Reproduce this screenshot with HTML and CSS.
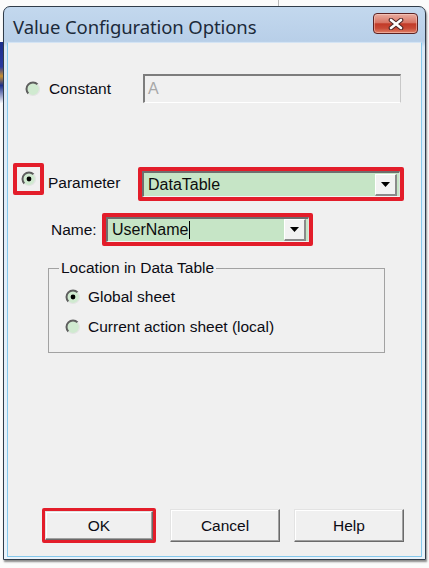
FILE: index.html
```html
<!DOCTYPE html>
<html>
<head>
<meta charset="utf-8">
<title>Value Configuration Options</title>
<link rel="stylesheet" href="styles.css">
</head>
<body>
<div class="screen">
  <span class="bg-strip"></span>
  <span class="bg-line"></span>
  <div class="window">
    <div class="titlebar">
      <span class="title">Value Configuration Options</span>
      <span class="close">
        <svg width="16" height="12" viewBox="0 0 16 12"><path d="M3 2L13 10M13 2L3 10" stroke="#4a2424" stroke-width="4.6" stroke-linecap="round"/><path d="M3 2L13 10M13 2L3 10" stroke="#ffffff" stroke-width="2.6" stroke-linecap="round"/></svg>
      </span>
    </div>
    <div class="client">
      <div class="row row-constant">
        <svg class="radio" width="16" height="16" viewBox="0 0 16 16"><circle cx="8" cy="8" r="6.5" fill="#d0ead0"/><path d="M12.6 3.4A6.5 6.5 0 0 0 3.4 12.6" fill="none" stroke="#5e5e5e" stroke-width="2"/><path d="M3.4 12.6A6.5 6.5 0 0 0 12.6 3.4" fill="none" stroke="#e4e4e4" stroke-width="1.2"/></svg>
        <span class="label label-constant">Constant</span>
        <div class="textfield">A</div>
      </div>
      <div class="row row-param">
        <span class="hl hl-radio">
          <svg class="radio" width="16" height="16" viewBox="0 0 16 16"><circle cx="8" cy="8" r="6.5" fill="#d0ead0"/><path d="M12.6 3.4A6.5 6.5 0 0 0 3.4 12.6" fill="none" stroke="#5e5e5e" stroke-width="2"/><path d="M3.4 12.6A6.5 6.5 0 0 0 12.6 3.4" fill="none" stroke="#e4e4e4" stroke-width="1.2"/><circle cx="8" cy="8" r="2.4" fill="#000"/></svg>
        </span>
        <span class="label label-param">Parameter</span>
        <div class="hl hl-combo">
          <div class="combo combo-wide">
            <span class="combo-text">DataTable</span>
            <span class="drop"><svg width="9" height="5" viewBox="0 0 9 5"><path d="M0 0H9L4.5 5Z" fill="#000"/></svg></span>
          </div>
        </div>
      </div>
      <div class="row row-name">
        <span class="label label-name">Name:</span>
        <div class="hl hl-name">
          <div class="combo combo-name">
            <span class="combo-text">UserName<span class="caret"></span></span>
            <span class="drop"><svg width="9" height="5" viewBox="0 0 9 5"><path d="M0 0H9L4.5 5Z" fill="#000"/></svg></span>
          </div>
        </div>
      </div>
      <fieldset class="group">
        <legend>Location in Data Table</legend>
        <div class="option">
          <svg class="radio" width="16" height="16" viewBox="0 0 16 16"><circle cx="8" cy="8" r="6.5" fill="#d0ead0"/><path d="M12.6 3.4A6.5 6.5 0 0 0 3.4 12.6" fill="none" stroke="#5e5e5e" stroke-width="2"/><path d="M3.4 12.6A6.5 6.5 0 0 0 12.6 3.4" fill="none" stroke="#e4e4e4" stroke-width="1.2"/><circle cx="8" cy="8" r="2.4" fill="#000"/></svg>
          <span class="label">Global sheet</span>
        </div>
        <div class="option">
          <svg class="radio" width="16" height="16" viewBox="0 0 16 16"><circle cx="8" cy="8" r="6.5" fill="#d0ead0"/><path d="M12.6 3.4A6.5 6.5 0 0 0 3.4 12.6" fill="none" stroke="#5e5e5e" stroke-width="2"/><path d="M3.4 12.6A6.5 6.5 0 0 0 12.6 3.4" fill="none" stroke="#e4e4e4" stroke-width="1.2"/></svg>
          <span class="label">Current action sheet (local)</span>
        </div>
      </fieldset>
      <div class="buttons">
        <div class="hl hl-ok"><button class="btn btn-ok">OK</button></div>
        <button class="btn">Cancel</button>
        <button class="btn">Help</button>
      </div>
    </div>
  </div>
</div>
</body>
</html>
```
FILE: styles.css
```css
html, body {
  margin: 0;
  padding: 0;
  background: #ffffff;
}
.screen {
  position: relative;
  width: 429px;
  height: 568px;
  overflow: hidden;
  background: #fbfbfb;
  padding: 6px 0 0 3px;
  box-sizing: border-box;
  font-family: "Liberation Sans", Arial, sans-serif;
  font-size: 15.5px;
  color: #0c0c14;
}
.bg-strip {
  position: absolute;
  left: 0;
  top: 42px;
  width: 3px;
  height: 62px;
  background: linear-gradient(#1c2f8c, #2a3aa0 40%, #c89030 55%, #1c2f8c 70%, #ffffff 100%);
}
.bg-line {
  position: absolute;
  left: 278px;
  top: 0;
  width: 1px;
  height: 6px;
  background: #b8b8b8;
}
.window {
  width: 423px;
  height: 554px;
  box-sizing: border-box;
  border: 1px solid #303c4a;
  border-radius: 7px 7px 0 0;
  background: linear-gradient(#c3d8ee, #b8cfe8 34px, #dbe9f6 40px, #e9f2fa);
  padding: 0 3px 2px 3px;
  display: flex;
  flex-direction: column;
  box-shadow: 1px 2px 2px rgba(0, 0, 0, 0.45);
}
.titlebar {
  height: 35px;
  flex: none;
  display: flex;
  justify-content: space-between;
  align-items: flex-start;
}
.title {
  font-family: "Noto Sans", "Open Sans", sans-serif;
  font-size: 18.5px;
  color: #1c2a3a;
  margin: 8px 0 0 6px;
  line-height: 24px;
  letter-spacing: -0.1px;
}
.close {
  width: 45px;
  height: 21px;
  box-sizing: border-box;
  margin: 6px 4px 0 0;
  border: 1px solid #5c2222;
  border-radius: 4px;
  background: linear-gradient(#e9ada0, #d87565 45%, #c23a28 52%, #c84a36 75%, #e0826a);
  box-shadow: inset 0 0 0 1px rgba(255, 220, 210, 0.45);
  display: flex;
  align-items: center;
  justify-content: center;
}
.client {
  flex: 1;
  background: #f0f0f0;
  border: 1px solid #86c8ec;
  border-top-color: #d4e4f4;
  display: flex;
  flex-direction: column;
}
.row {
  display: flex;
  flex: none;
}
.label {
  line-height: 18px;
  white-space: nowrap;
}
.radio {
  flex: none;
  display: block;
}
.row-constant {
  margin-top: 31px;
  height: 29px;
  align-items: center;
  padding-left: 17px;
}
.label-constant {
  margin-left: 8px;
  width: 94px;
}
.textfield {
  width: 258px;
  height: 29px;
  box-sizing: border-box;
  border-style: solid;
  border-width: 2px 1px 1px 2px;
  border-color: #7d7d7d #c8c8c8 #ffffff #7d7d7d;
  background: #f0f0f0;
  color: #a8a8a8;
  font-size: 16px;
  line-height: 25px;
  padding-left: 3px;
}
.hl {
  border: 4px solid #e31d2a;
  border-radius: 2px;
  box-sizing: border-box;
  flex: none;
}
.row-param {
  margin-top: 60px;
  height: 38px;
  align-items: flex-start;
}
.hl-radio {
  width: 31px;
  height: 32px;
  margin-left: 5px;
  display: flex;
  align-items: center;
  padding-left: 4px;
}
.label-param {
  margin: 11px 0 0 4px;
  width: 90px;
}
.hl-combo {
  margin-top: 4px;
  width: 266px;
  height: 34px;
}
.combo {
  height: 100%;
  box-sizing: border-box;
  border-style: solid;
  border-width: 2px 1px 1px 2px;
  border-color: #6e6e6e #e0e0e0 #f4f4f4 #6e6e6e;
  background: #c6e5c6;
  display: flex;
  align-items: center;
  justify-content: space-between;
  padding: 0 2px 0 4px;
}
.combo-text {
  font-size: 16px;
  line-height: 20px;
  color: #0d0d0d;
  display: flex;
  align-items: center;
}
.caret {
  display: inline-block;
  width: 1px;
  height: 18px;
  background: #000;
  margin-left: 1px;
}
.drop {
  width: 22px;
  height: 22px;
  box-sizing: border-box;
  background: #f2f2f2;
  border-style: solid;
  border-width: 1px 2px 2px 1px;
  border-color: #ffffff #8a8a8a #8a8a8a #ffffff;
  display: flex;
  align-items: center;
  justify-content: center;
}
.row-name {
  margin-top: 12px;
  height: 33px;
  align-items: center;
  padding-left: 43px;
}
.label-name {
  width: 51px;
}
.hl-name {
  width: 211px;
  height: 33px;
}
.combo-name .combo-text {
  padding-left: 0;
}
.group {
  margin: 13px 0 0 40px;
  width: 337px;
  box-sizing: border-box;
  border: 1px solid #a2a2a2;
  padding: 0 0 10px 0;
  flex: none;
}
.group legend {
  margin-left: 10px;
  padding: 0 2px;
  line-height: 18px;
}
.option {
  height: 30px;
  display: flex;
  align-items: center;
  padding-left: 16px;
}
.option:first-of-type {
  margin-top: 5px;
}
.option .label {
  margin-left: 7px;
}
.buttons {
  margin-top: auto;
  margin-bottom: 13px;
  padding-left: 34px;
  display: flex;
  align-items: center;
  gap: 14px;
}
.btn {
  width: 110px;
  height: 33px;
  box-sizing: border-box;
  font-family: "Liberation Sans", Arial, sans-serif;
  font-size: 15.5px;
  color: #0c0c14;
  background: #f0f0f0;
  border-style: solid;
  border-width: 1px;
  border-color: #e3e3e3 #6a6a6a #6a6a6a #e3e3e3;
  box-shadow: inset -1px -1px 0 #a0a0a0, inset 1px 1px 0 #ffffff;
  padding: 0;
  margin: 0;
}
.hl-ok {
  width: 114px;
  height: 35px;
  border-width: 3px;
}
.btn-ok {
  width: 108px;
  height: 29px;
  display: block;
}
```
